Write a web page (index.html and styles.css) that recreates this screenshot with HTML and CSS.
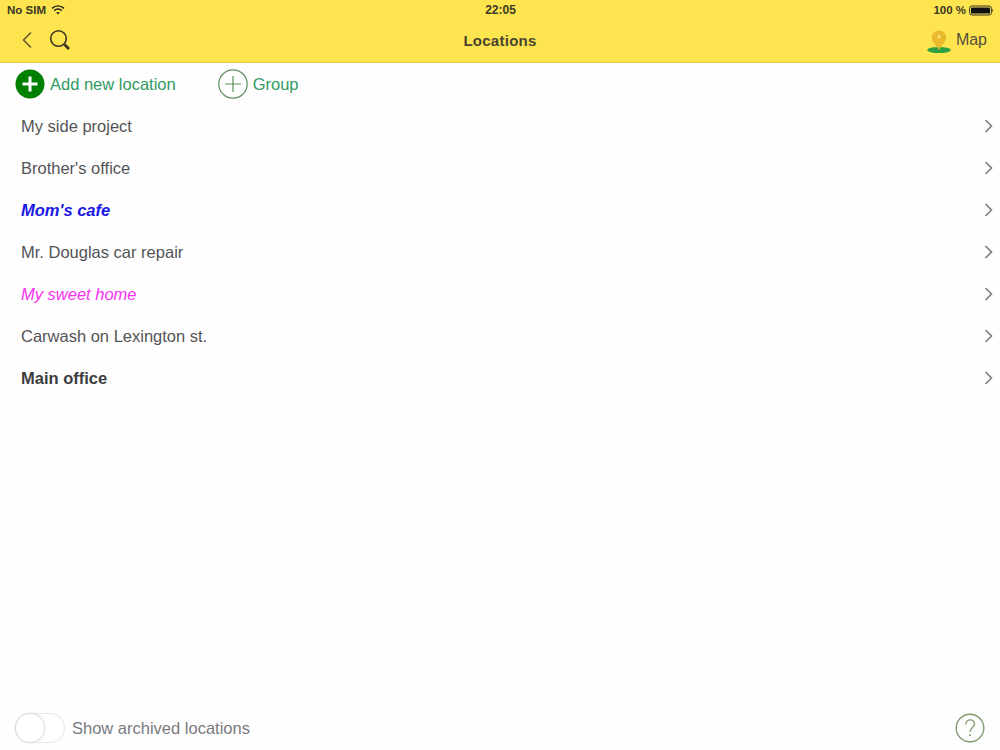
FILE: index.html
```html
<!DOCTYPE html>
<html lang="en">
<head>
<meta charset="utf-8">
<title>Locations</title>
<link rel="stylesheet" href="styles.css">
</head>
<body>
<div class="app">
  <header class="header">
    <div class="status">
      <div class="status-left">
        <span>No SIM</span>
        <svg class="wifi" width="14" height="10" viewBox="0 0 14 10"><path d="M1 3.400C4.600 .2 9.400 .2 13 3.400" fill="none" stroke="#222" stroke-width="1.500"/><path d="M3.200 5.600C5.500 3.700 8.500 3.700 10.800 5.600" fill="none" stroke="#222" stroke-width="1.500"/><path d="M5.200 7.600C6.300 6.700 7.700 6.700 8.800 7.600L7 9.600Z" fill="#222"/></svg>
      </div>
      <div class="status-time">22:05</div>
      <div class="status-right">
        <span>100 %</span>
        <svg width="25" height="11" viewBox="0 0 25 11"><rect x=".6" y="1" width="21.800" height="9" rx="2.400" fill="none" stroke="#333" stroke-width="1"/><rect x="2" y="2.400" width="19" height="6.200" rx="1.200" fill="#111"/><path d="M23.400 3.800c1 .3 1 3.100 0 3.400Z" fill="#333"/></svg>
      </div>
    </div>
    <nav class="nav">
      <div class="nav-left">
        <svg width="12" height="18" viewBox="0 0 12 18"><path d="M10 1.500 2.500 9 10 16.500" fill="none" stroke="#5a5230" stroke-width="1.500"/></svg>
        <svg width="22" height="22" viewBox="0 0 22 22"><circle cx="9.500" cy="9.500" r="7.800" fill="none" stroke="#3a3520" stroke-width="1.600"/><path d="M15.500 15.500l4.500 4.500" stroke="#3a3520" stroke-width="2.800"/></svg>
      </div>
      <h1 class="nav-title">Locations</h1>
      <div class="nav-right">
        <svg class="pin" width="24" height="24" viewBox="0 0 25 24"><ellipse cx="12.500" cy="20.300" rx="12.300" ry="3.200" fill="#2ea043"/><path d="M12.500 20.500C11 16 5 12.500 5 7.500a7.500 7.500 0 0 1 15 0C20 12.500 14 16 12.500 20.500Z" fill="#ebb92c"/><circle cx="12.500" cy="6.500" r="2" fill="#f7dc6a"/></svg>
        <span>Map</span>
      </div>
    </nav>
  </header>

  <div class="actions">
    <button class="action action-add">
      <svg width="30" height="30" viewBox="0 0 30 30"><circle cx="15" cy="15" r="14.500" fill="#008000"/><path d="M15 7.500v15M7.500 15h15" stroke="#fff" stroke-width="3"/></svg>
      <span>Add new location</span>
    </button>
    <button class="action action-group">
      <svg width="30" height="30" viewBox="0 0 30 30"><circle cx="15" cy="15" r="14.200" fill="none" stroke="#5c8f5c" stroke-width="1.200"/><path d="M15 7v16M7 15h16" stroke="#5c8f5c" stroke-width="1.200"/></svg>
      <span>Group</span>
    </button>
  </div>

  <ul class="list">
    <li class="row"><span>My side project</span><svg class="chev" width="9" height="14" viewBox="0 0 9 14"><path d="M1.500 1 7.500 7 1.500 13" fill="none" stroke="#808083" stroke-width="1.700"/></svg></li>
    <li class="row"><span>Brother's office</span><svg class="chev" width="9" height="14" viewBox="0 0 9 14"><path d="M1.500 1 7.500 7 1.500 13" fill="none" stroke="#808083" stroke-width="1.700"/></svg></li>
    <li class="row row-blue"><span>Mom's cafe</span><svg class="chev" width="9" height="14" viewBox="0 0 9 14"><path d="M1.500 1 7.500 7 1.500 13" fill="none" stroke="#808083" stroke-width="1.700"/></svg></li>
    <li class="row"><span>Mr. Douglas car repair</span><svg class="chev" width="9" height="14" viewBox="0 0 9 14"><path d="M1.500 1 7.500 7 1.500 13" fill="none" stroke="#808083" stroke-width="1.700"/></svg></li>
    <li class="row row-pink"><span>My sweet home</span><svg class="chev" width="9" height="14" viewBox="0 0 9 14"><path d="M1.500 1 7.500 7 1.500 13" fill="none" stroke="#808083" stroke-width="1.700"/></svg></li>
    <li class="row"><span>Carwash on Lexington st.</span><svg class="chev" width="9" height="14" viewBox="0 0 9 14"><path d="M1.500 1 7.500 7 1.500 13" fill="none" stroke="#808083" stroke-width="1.700"/></svg></li>
    <li class="row row-bold"><span>Main office</span><svg class="chev" width="9" height="14" viewBox="0 0 9 14"><path d="M1.500 1 7.500 7 1.500 13" fill="none" stroke="#808083" stroke-width="1.700"/></svg></li>
  </ul>

  <footer class="footer">
    <div class="toggle-wrap">
      <div class="toggle"><div class="knob"></div></div>
      <span>Show archived locations</span>
    </div>
    <svg width="30" height="30" viewBox="0 0 30 30"><circle cx="15" cy="15" r="13.800" fill="none" stroke="#7f9a6f" stroke-width="1.400"/><path d="M10.800 11.500c.2-6 8.600-6 8.600-.6 0 3.600-4.400 3.600-4.400 8" fill="none" stroke="#7f9a6f" stroke-width="1.300"/><circle cx="15" cy="22.300" r="1" fill="#7f9a6f"/></svg>
  </footer>
</div>
</body>
</html>
```

FILE: styles.css
```css
* { box-sizing: border-box; }
html, body { margin: 0; padding: 0; }
body { font-family: "Liberation Sans", Arial, sans-serif; background: #fff; }
.app { width: 1000px; height: 750px; display: flex; flex-direction: column; overflow: hidden; background: #fefefe; }

.header { height: 63px; background: #fee44f; border-bottom: 1px solid #e0c84a; flex: none; }
.status { height: 20px; padding: 0 6px 0 7px; display: grid; grid-template-columns: 1fr auto 1fr; align-items: center; font-size: 11.500px; font-weight: 700; color: #3a3826; }
.status-left { display: flex; align-items: center; gap: 5px; }
.status-time { font-size: 12px; }
.status-right { display: flex; justify-content: flex-end; align-items: center; gap: 3px; }
.nav { height: 42px; padding: 0 13px 2px 21px; display: grid; grid-template-columns: 1fr auto 1fr; align-items: center; }
.nav-left { display: flex; align-items: center; gap: 16px; }
.nav-title { margin: 0 0 0 -8px; font-size: 15px; font-weight: 700; letter-spacing: .25px; color: #4a4630; }
.nav-right { display: flex; justify-content: flex-end; align-items: center; gap: 5px; font-size: 16px; color: #55503a; }
.pin { margin-top: 4px; }

.actions { height: 42px; flex: none; padding-left: 15px; display: flex; align-items: center; gap: 42px; }
.action { display: flex; align-items: center; gap: 5px; padding: 0; border: 0; background: none; font: inherit; font-size: 16.500px; color: #2f9a62; }

.list { list-style: none; margin: 0; padding: 0; flex: 1; }
.row { height: 42px; padding: 1px 7px 0 21px; display: flex; align-items: center; justify-content: space-between; font-size: 16.500px; color: #545456; }
.chev { margin-top: -1px; }
.row-blue { color: #1a18e6; font-weight: 700; font-style: italic; }
.row-pink { color: #fa32f0; font-style: italic; }
.row-bold { color: #3c3c3e; font-weight: 700; }

.footer { height: 44px; flex: none; padding: 0 15px; display: flex; align-items: center; justify-content: space-between; }
.toggle-wrap { display: flex; align-items: center; gap: 7px; font-size: 16.500px; color: #7a7a7e; }
.toggle { width: 50px; height: 30px; border: 1px solid #e6e6e6; border-radius: 15px; background: #fff; }
.knob { width: 28px; height: 28px; border-radius: 50%; background: #fff; box-shadow: 0 0 2px 1px #d6d6d6; }
```
